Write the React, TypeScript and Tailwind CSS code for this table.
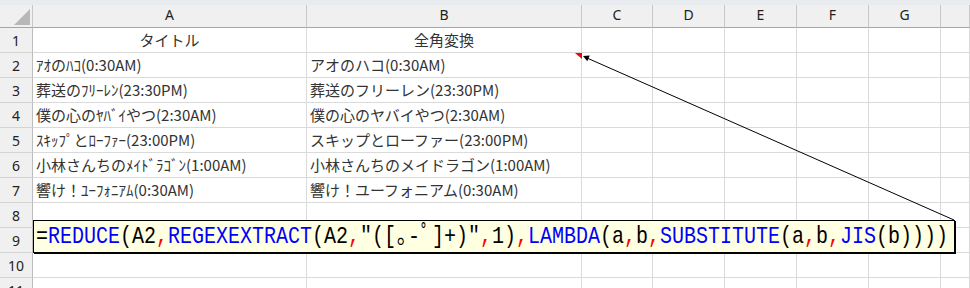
const COLS = ['A', 'B', 'C', 'D', 'E', 'F', 'G', ''];

const colA = [
  'タイトル',
  'ｱｵのﾊｺ(0:30AM)',
  '葬送のﾌﾘｰﾚﾝ(23:30PM)',
  '僕の心のﾔﾊﾞｲやつ(2:30AM)',
  'ｽｷｯﾌﾟとﾛｰﾌｧｰ(23:00PM)',
  '小林さんちのﾒｲﾄﾞﾗｺﾞﾝ(1:00AM)',
  '響け！ﾕｰﾌｫﾆｱﾑ(0:30AM)',
];

const colB = [
  '全角変換',
  'アオのハコ(0:30AM)',
  '葬送のフリーレン(23:30PM)',
  '僕の心のヤバイやつ(2:30AM)',
  'スキップとローファー(23:00PM)',
  '小林さんちのメイドラゴン(1:00AM)',
  '響け！ユーフォニアム(0:30AM)',
];

type Tok = [string, 'f' | 'c' | 'n'];

// formula split by colour: f = function name, c = comma, n = plain
const formula: Tok[] = [
  ['=', 'n'], ['REDUCE', 'f'], ['(A2', 'n'], [',', 'c'],
  ['REGEXEXTRACT', 'f'], ['(A2', 'n'], [',', 'c'],
  ['"([｡-ﾟ]+)"', 'n'], [',', 'c'], ['1)', 'n'], [',', 'c'],
  ['LAMBDA', 'f'], ['(a', 'n'], [',', 'c'], ['b', 'n'], [',', 'c'],
  ['SUBSTITUTE', 'f'], ['(a', 'n'], [',', 'c'], ['b', 'n'], [',', 'c'],
  ['JIS', 'f'], ['(b))))', 'n'],
];

const tone = { f: 'text-[#0000ff]', c: 'text-[#ff0000]', n: 'text-black' };

function Formula() {
  return (
    <div className="flex items-center h-full pl-[2px] scale-y-[1.2] font-['Liberation_Mono','Noto_Sans_CJK_JP',monospace] text-[20px] leading-none">
      {formula.map(([text, kind], i) =>
        Array.from(text).map((ch, j) => (
          <span key={`${i}-${j}`} className={`inline-block w-[12px] text-center ${tone[kind]}`}>
            {ch}
          </span>
        ))
      )}
    </div>
  );
}

export default function App() {
  const rows = Array.from({ length: 11 }, (_, i) => i + 1);
  return (
    <div className="relative w-[970px] h-[288px] overflow-hidden bg-white font-['Noto_Sans_CJK_JP',sans-serif]">
      <div className="h-[5px] bg-[#e8ebef]" />
      <div className="grid grid-cols-[33px_274px_275px_71px_72px_72px_72px_72px_1fr] grid-rows-[23px_repeat(11,25px)]">
        {/* column headers */}
        <div className="relative bg-[#f0f0f0] border-r border-b border-r-[#c8c8c8] border-b-[#a6a6a6]">
          <svg className="absolute left-[14px] top-[4px]" width="16" height="16" viewBox="0 0 16 16">
            <polygon points="16,0 16,16 0,16" fill="#b8b8b8" />
          </svg>
        </div>
        {COLS.map((c, i) => (
          <div
            key={i}
            className="flex justify-center pt-[1px] bg-[#f0f0f0] border-r border-b border-r-[#c8c8c8] border-b-[#a6a6a6] text-[14px] leading-[18px] text-[#222] font-['Noto_Sans',sans-serif]"
          >
            {c}
          </div>
        ))}

        {rows.map((r) => (
          <Row key={r} r={r} />
        ))}
      </div>

      {/* comment connector + indicator on B2 */}
      <svg className="absolute inset-0 pointer-events-none" width="970" height="288">
        <polygon points="575,53 582,53 582,59" fill="#ff0000" />
        <line x1="954" y1="220" x2="587" y2="58" stroke="#000" strokeWidth="1" />
        <polygon points="583,56 589.7,55.5 587.3,61.2" fill="#000" />
      </svg>

      {/* comment box */}
      <div className="absolute left-[33px] top-[220px] w-[922px] h-[33px] bg-[#ffffe1] border border-black shadow-[1px_1px_0_#000]">
        <Formula />
      </div>
    </div>
  );
}

function Row({ r }: { r: number }) {
  const a = colA[r - 1];
  const b = colB[r - 1];
  const title = r === 1;
  return (
    <>
      <div className="flex items-center justify-center bg-[#f0f0f0] border-r border-b border-r-[#bdbdbd] border-b-[#d4d4d4] text-[14px] text-[#222] font-['Noto_Sans',sans-serif]">
        {r}
      </div>
      <div className={`flex items-center px-[3px] border-r border-b border-[#dadada] text-[15px] text-[#333] whitespace-nowrap ${title ? 'justify-center' : ''}`}>
        {a}
      </div>
      <div className={`flex items-center px-[3px] border-r border-b border-[#dadada] text-[15px] text-[#333] whitespace-nowrap ${title ? 'justify-center' : ''}`}>
        {b}
      </div>
      {Array.from({ length: 6 }, (_, i) => (
        <div key={i} className="border-r border-b border-[#dadada]" />
      ))}
    </>
  );
}
